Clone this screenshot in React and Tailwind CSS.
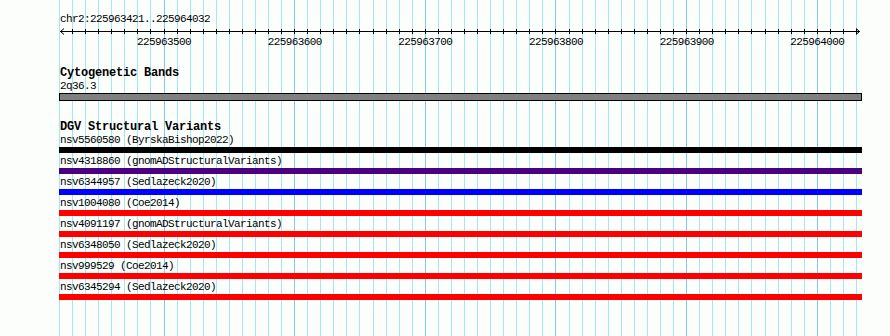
import React from "react";

// browser window: 225963421..225964032, 100bp = 130.66px
const PX_PER_BP = 1.3066;
const xOf = (bp) => 164 + (bp - 225963500) * PX_PER_BP;

const variants = [
  { id: "nsv5560580", src: "ByrskaBishop2022", color: "bg-black" },
  { id: "nsv4318860", src: "gnomADStructuralVariants", color: "bg-[#4b0082]" },
  { id: "nsv6344957", src: "Sedlazeck2020", color: "bg-[#0000ff]" },
  { id: "nsv1004080", src: "Coe2014", color: "bg-[#ff0000]" },
  { id: "nsv4091197", src: "gnomADStructuralVariants", color: "bg-[#ff0000]" },
  { id: "nsv6348050", src: "Sedlazeck2020", color: "bg-[#ff0000]" },
  { id: "nsv999529", src: "Coe2014", color: "bg-[#ff0000]" },
  { id: "nsv6345294", src: "Sedlazeck2020", color: "bg-[#ff0000]" },
];

const majorTicks = [225963500, 225963600, 225963700, 225963800, 225963900, 225964000];

function GridLines() {
  const lines = [];
  for (let bp = 225963420; bp <= 225964030; bp += 10) {
    const x = Math.floor(xOf(bp)) + 0.5;
    const major = bp % 100 === 0;
    lines.push(
      <line key={bp} x1={x} x2={x} y1={0} y2={336} stroke={major ? "#86c6ea" : "#a6e6f0"} strokeWidth="1" />
    );
  }
  return (
    <svg className="absolute inset-0" width="890" height="336">
      {lines}
    </svg>
  );
}

function Ruler() {
  const ticks = [];
  for (let bp = 225963430; bp <= 225964030; bp += 10) {
    const x = Math.floor(xOf(bp)) + 0.5 - 59;
    ticks.push(<line key={bp} x1={x} x2={x} y1={2} y2={7} stroke="black" />);
  }
  return (
    <svg width="803" height="10" className="block">
      <line x1="1" x2="801" y1="4.5" y2="4.5" stroke="black" />
      <polyline points="5,1.5 1.5,4.5 5,7.5" fill="none" stroke="black" />
      <polyline points="797,1.5 800.5,4.5 797,7.5" fill="none" stroke="black" />
      {ticks}
    </svg>
  );
}

export default function App() {
  return (
    <div className="relative w-[890px] h-[336px] overflow-hidden bg-[#fcfefc] font-['Liberation_Mono',monospace] text-[11px] leading-[13px] tracking-[-0.6px] text-black">
      <GridLines />

      <div className="relative pl-[59px] pt-[13px] w-[862px]">
        <div className="pl-px h-[13px]">chr2:225963421..225964032</div>

        <div className="mt-[1px]">
          <Ruler />
        </div>

        <div className="flex h-[13px] mt-[-1px]">
          <div className="w-[39.7px] shrink-0" />
          {majorTicks.map((bp) => (
            <div key={bp} className="w-[130.66px] shrink-0 text-center">
              {bp}
            </div>
          ))}
        </div>

        <div className="mt-[18px]">
          <div className="pl-px h-[13px] font-bold text-[12px] tracking-[-0.2px]">Cytogenetic Bands</div>
          <div className="pl-px h-[13px]">2q36.3</div>
          <div className="h-[8px] border border-black bg-[#808080]" />
        </div>

        <div className="mt-[20px]">
          <div className="pl-px h-[13px] font-bold text-[12px] tracking-[-0.2px]">DGV Structural Variants</div>
          {variants.map((v) => (
            <div key={v.id} className="mb-[2px]">
              <div className="pl-px h-[13px]">
                {v.id} ({v.src})
              </div>
              <div className={`h-[6px] ${v.color}`} />
            </div>
          ))}
        </div>
      </div>
    </div>
  );
}
